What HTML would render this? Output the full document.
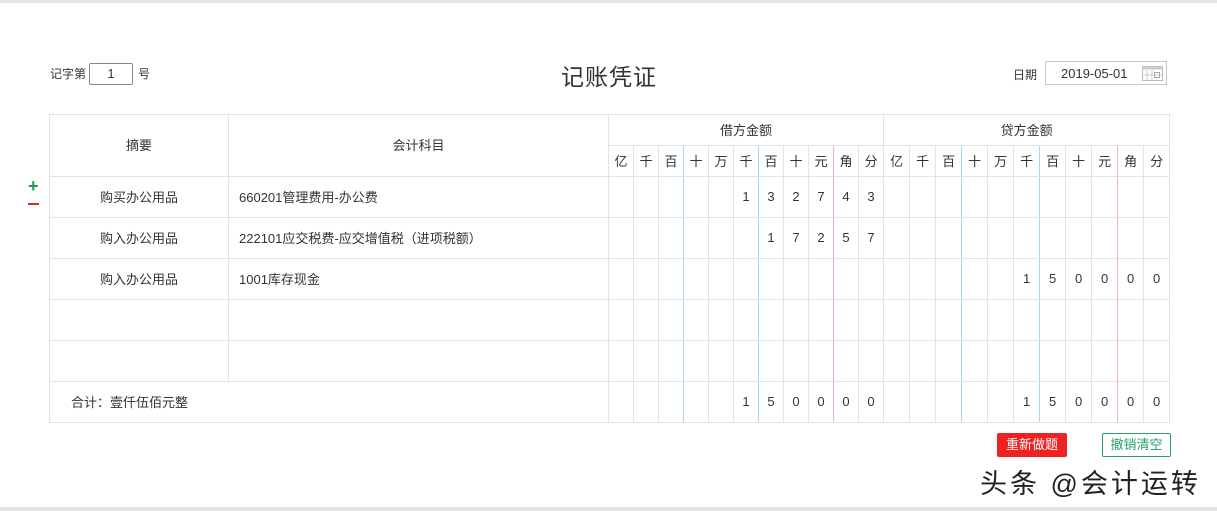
<!DOCTYPE html>
<html><head><meta charset="utf-8"><style>
body{margin:0;width:1217px;height:511px;background:#fff;position:relative;overflow:hidden;font-family:"Liberation Sans","Noto Sans CJK SC",sans-serif;color:#333;font-size:13px}
.topbar{position:absolute;left:0;top:0;width:1217px;height:3px;background:#e4e4e4}
.botbar{position:absolute;left:0;top:507px;width:1217px;height:4px;background:#e4e4e4}
.abs{position:absolute}
table{position:absolute;left:49px;top:114px;border-collapse:collapse;table-layout:fixed;width:1121px}
td{border:1px solid #e3e3e3;text-align:center;padding:0 0 2px 0;font-size:13px;color:#333}
.b{border-right:1px solid #a9d5f5}
.r{border-right:1px solid #f2b3b3}
.l{text-align:left;padding-left:10px}
</style></head><body>
<div class="topbar"></div><div class="botbar"></div>
<div class="abs" style="left:50px;top:65px;font-size:12px">记字第</div>
<div class="abs" style="left:89px;top:63px;width:42px;height:20px;border:1px solid #888;border-radius:2px;text-align:center;line-height:20px;font-size:13px">1</div>
<div class="abs" style="left:138px;top:65px;font-size:12px">号</div>
<div class="abs" style="left:561px;top:58px;font-size:23px;color:#333;letter-spacing:1px">记账凭证</div>
<div class="abs" style="left:1013px;top:66px;font-size:12px">日期</div>
<div class="abs" style="left:1045px;top:61px;width:120px;height:22px;border:1px solid #c8c8c8"><span class="abs" style="left:15px;top:4px;font-size:13px">2019-05-01</span>
<svg class="abs" style="left:96px;top:4px" width="21" height="15"><rect x="0.5" y="0.5" width="20" height="14" fill="#fff" stroke="#bbb"/><rect x="0.5" y="0.5" width="20" height="3" fill="#ccc"/><path d="M5 4v10M10 4v10M1 9h19" stroke="#ccc"/><rect x="12.5" y="6.5" width="5" height="5" fill="none" stroke="#aaa"/></svg></div>
<div class="abs" style="left:28px;top:176px;color:#1e9e52;font-size:18px;font-weight:bold">+</div>
<div class="abs" style="left:28px;top:203px;width:11px;height:2px;background:#d42b2b"></div>
<table>
<colgroup><col style="width:179px"><col style="width:380px">
<col style="width:25px"><col style="width:25px"><col style="width:25px"><col style="width:25px"><col style="width:25px"><col style="width:25px"><col style="width:25px"><col style="width:25px"><col style="width:25px"><col style="width:25px"><col style="width:25px">
<col style="width:26px"><col style="width:26px"><col style="width:26px"><col style="width:26px"><col style="width:26px"><col style="width:26px"><col style="width:26px"><col style="width:26px"><col style="width:26px"><col style="width:26px"><col style="width:26px"></colgroup>
<tr style="height:31px"><td rowspan="2">摘要</td><td rowspan="2">会计科目</td><td colspan="11">借方金额</td><td colspan="11">贷方金额</td></tr>
<tr style="height:31px"><td>亿</td><td>千</td><td class="b">百</td><td>十</td><td>万</td><td class="b">千</td><td>百</td><td>十</td><td class="r">元</td><td>角</td><td>分</td><td>亿</td><td>千</td><td class="b">百</td><td>十</td><td>万</td><td class="b">千</td><td>百</td><td>十</td><td class="r">元</td><td>角</td><td>分</td></tr>
<tr style="height:41px"><td>购买办公用品</td><td class="l">660201管理费用-办公费</td><td></td><td></td><td class="b"></td><td></td><td></td><td class="b">1</td><td>3</td><td>2</td><td class="r">7</td><td>4</td><td>3</td><td></td><td></td><td class="b"></td><td></td><td></td><td class="b"></td><td></td><td></td><td class="r"></td><td></td><td></td></tr>
<tr style="height:41px"><td>购入办公用品</td><td class="l">222101应交税费-应交增值税（进项税额）</td><td></td><td></td><td class="b"></td><td></td><td></td><td class="b"></td><td>1</td><td>7</td><td class="r">2</td><td>5</td><td>7</td><td></td><td></td><td class="b"></td><td></td><td></td><td class="b"></td><td></td><td></td><td class="r"></td><td></td><td></td></tr>
<tr style="height:41px"><td>购入办公用品</td><td class="l">1001库存现金</td><td></td><td></td><td class="b"></td><td></td><td></td><td class="b"></td><td></td><td></td><td class="r"></td><td></td><td></td><td></td><td></td><td class="b"></td><td></td><td></td><td class="b">1</td><td>5</td><td>0</td><td class="r">0</td><td>0</td><td>0</td></tr>
<tr style="height:41px"><td></td><td></td><td></td><td></td><td class="b"></td><td></td><td></td><td class="b"></td><td></td><td></td><td class="r"></td><td></td><td></td><td></td><td></td><td class="b"></td><td></td><td></td><td class="b"></td><td></td><td></td><td class="r"></td><td></td><td></td></tr>
<tr style="height:41px"><td></td><td></td><td></td><td></td><td class="b"></td><td></td><td></td><td class="b"></td><td></td><td></td><td class="r"></td><td></td><td></td><td></td><td></td><td class="b"></td><td></td><td></td><td class="b"></td><td></td><td></td><td class="r"></td><td></td><td></td></tr>
<tr style="height:41px"><td colspan="2" style="text-align:left;padding-left:21px">合计：壹仟伍佰元整</td><td></td><td></td><td class="b"></td><td></td><td></td><td class="b">1</td><td>5</td><td>0</td><td class="r">0</td><td>0</td><td>0</td><td></td><td></td><td class="b"></td><td></td><td></td><td class="b">1</td><td>5</td><td>0</td><td class="r">0</td><td>0</td><td>0</td></tr>
</table>
<div class="abs" style="left:997px;top:433px;width:70px;height:24px;background:#ee2222;color:#fff;border-radius:2px;text-align:center;line-height:24px;font-size:13px">重新做题</div>
<div class="abs" style="left:1102px;top:433px;width:67px;height:22px;border:1px solid #2a9d6a;color:#2a9d6a;border-radius:2px;text-align:center;line-height:22px;font-size:13px">撤销清空</div>
<div class="abs" style="left:980px;top:462px;font-size:27px;color:#222;text-shadow:0 0 2px #fff;letter-spacing:3px">头条 @会计运转</div>
</body></html>
